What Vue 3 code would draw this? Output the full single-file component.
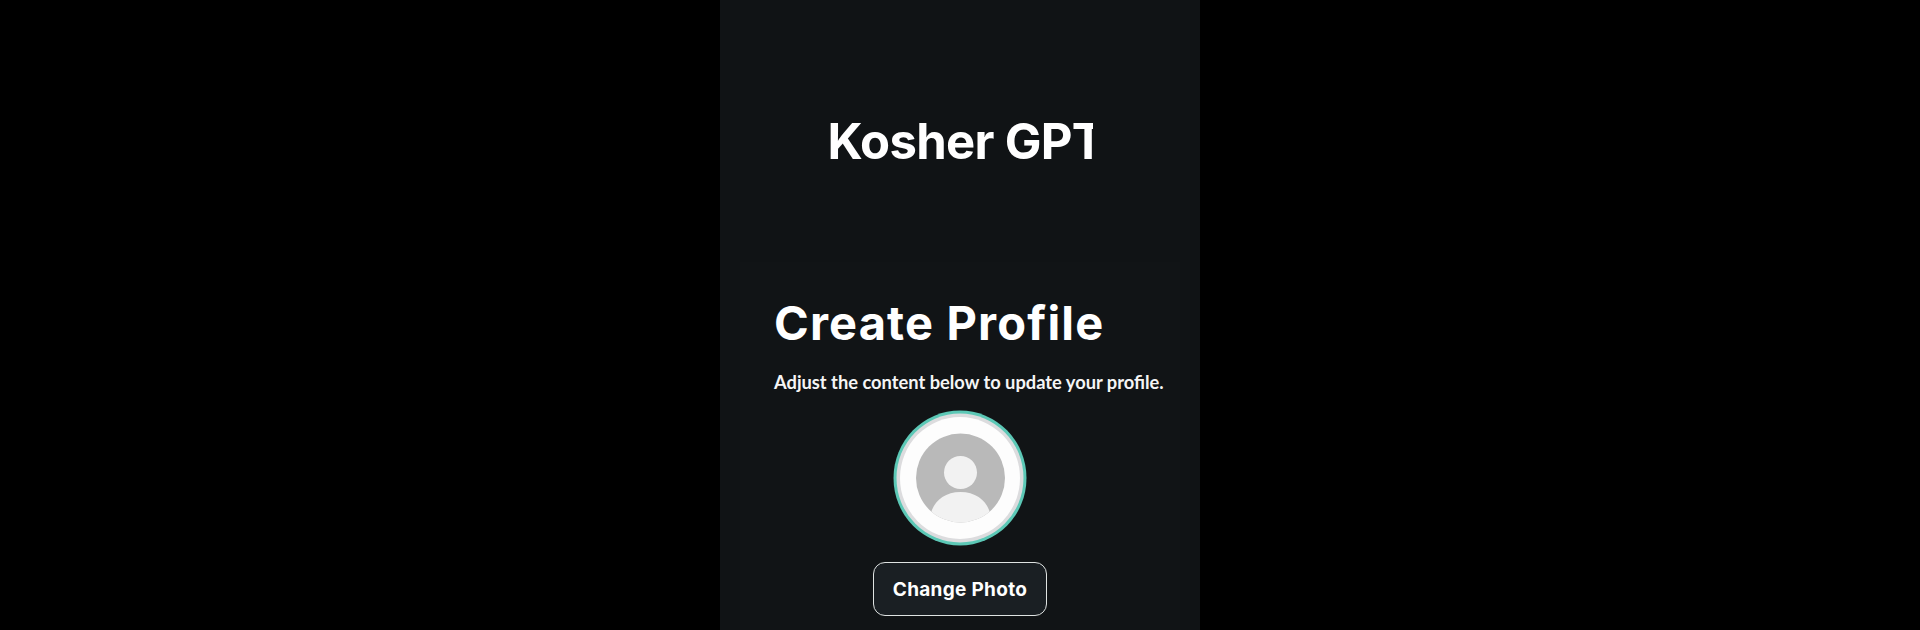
<script setup>
const title = 'Kosher GPT'
const heading = 'Create Profile'
const subtitle = 'Adjust the content below to update your profile.'
</script>

<template>
  <div class="page">
    <main class="phone">
      <header class="top">
        <h1 class="brand"><span>{{ title }}</span></h1>
      </header>
      <section class="card">
        <h2 class="heading">{{ heading }}</h2>
        <p class="sub">{{ subtitle }}</p>
        <div class="avatar">
          <svg width="135" height="137" viewBox="0 0 135 137">
            <defs>
              <clipPath id="face"><circle cx="67.500" cy="68" r="44.500" /></clipPath>
            </defs>
            <ellipse cx="67" cy="68" rx="66.500" ry="67.500" fill="#5cc8b6" />
            <ellipse cx="67" cy="68" rx="63.500" ry="64.500" fill="#dcdcde" />
            <ellipse cx="67" cy="68" rx="60" ry="61" fill="#fdfdfd" />
            <circle cx="67.500" cy="68" r="44.500" fill="#b9b9b9" />
            <g clip-path="url(#face)" fill="#f2f2f2">
              <circle cx="67.500" cy="62.500" r="16.500" />
              <path d="M38 103c3-12 14-21 29.500-21S94 91 97 103v20H38z" />
            </g>
          </svg>
        </div>
        <button class="change" type="button">Change Photo</button>
      </section>
    </main>
  </div>
</template>

<style>
html, body { margin: 0; background: #000; }
</style>

<style scoped>
.page {
  height: 630px;
  background: #000;
  display: flex;
  justify-content: center;
  overflow: hidden;
}
.phone {
  width: 480px;
  height: 630px;
  background: #101315;
  display: flex;
  flex-direction: column;
  align-items: center;
  overflow: hidden;
}
.top {
  height: 262px;
  width: 100%;
  display: flex;
  justify-content: center;
  padding-top: 112px;
  box-sizing: border-box;
}
.brand {
  width: 265px;
  height: 60px;
  margin: 0;
  overflow: hidden;
  white-space: nowrap;
  font-family: Inter, "Liberation Sans", sans-serif;
  font-size: 49px;
  line-height: 60px;
  font-weight: 700;
  letter-spacing: -0.7px;
  color: #fff;
}
.card {
  width: 440px;
  flex: 1;
  background: #111416;
  padding: 0 34px;
  box-sizing: border-box;
  display: flex;
  flex-direction: column;
}
.heading {
  margin: 31px 0 0;
  font-family: Inter, "Liberation Sans", sans-serif;
  font-size: 47px;
  line-height: 60px;
  font-weight: 700;
  letter-spacing: 1.15px;
  color: #fff;
  white-space: nowrap;
}
.sub {
  margin: 15px 0 0;
  font-family: Lato, "Liberation Sans", sans-serif;
  font-size: 18.3px;
  line-height: 28px;
  font-weight: 700;
  color: #f5f5f5;
  white-space: nowrap;
}
.avatar {
  margin-top: 14px;
  align-self: center;
  width: 135px;
  height: 137px;
}
.avatar svg { display: block; }
.change {
  align-self: center;
  margin-top: 15px;
  width: 174px;
  height: 54px;
  border: 1.5px solid #dfe3e2;
  border-radius: 12px;
  background: #1a1f23;
  color: #fff;
  font-family: Inter, "Liberation Sans", sans-serif;
  font-size: 19px;
  font-weight: 700;
  letter-spacing: 0.3px;
  padding: 0;
  flex: none;
}
</style>
